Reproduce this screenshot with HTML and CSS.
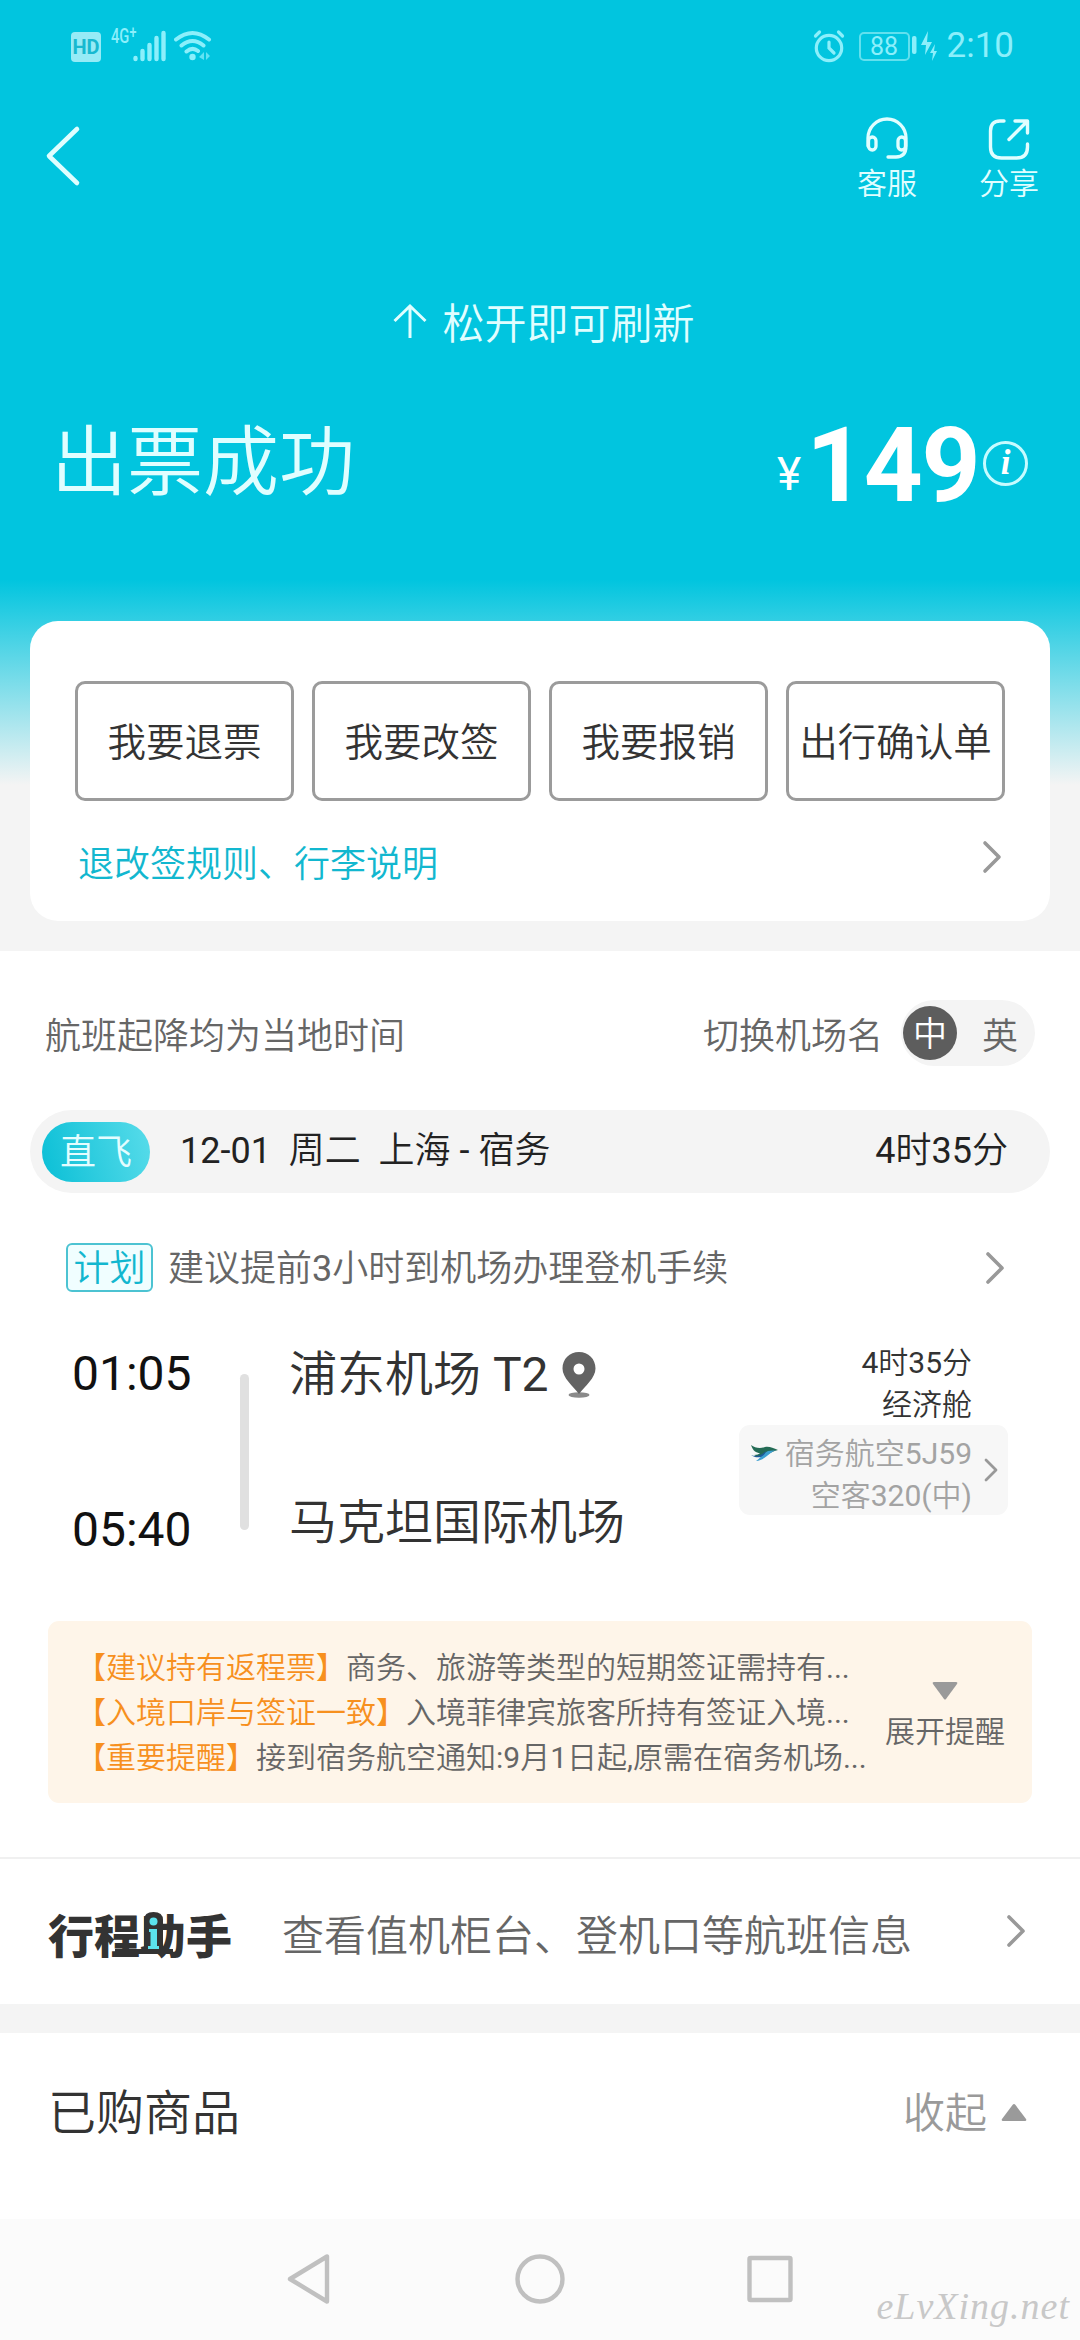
FILE: index.html
```html
<!DOCTYPE html>
<html lang="zh-CN">
<head>
<meta charset="utf-8">
<title>出票成功</title>
<link rel="stylesheet" href="styles.css">
</head>
<body>
<div class="screen">
  <div class="hero">
    <div class="status">
      <div class="status-left">
        <span class="hd">HD</span>
        <span class="net">4G<sup>+</sup></span>
        <svg class="signal" width="34" height="32" viewBox="0 0 34 32"><path d="M2.500 28v1M9.500 21v8M16.500 15v14M23.500 8v21M30.500 3v26" stroke="currentColor" stroke-width="4.400" stroke-linecap="round"/></svg>
        <svg class="wifi" width="38" height="32" viewBox="0 0 38 32" fill="none" stroke="currentColor" stroke-width="4" stroke-linecap="round"><path d="M2 9.500Q18.500-3.500 35 9.500M7.500 15.500Q18.500 6.500 29.500 15.500M12.500 21.500Q18.500 16.500 24 21"/><circle cx="18.500" cy="27" r="3.200" fill="currentColor" stroke="none"/><path d="M30 22v8l-5-3zM32 30v-8l4 4z" fill="currentColor" stroke="none" opacity=".7"/></svg>
      </div>
      <div class="status-right">
        <svg width="32" height="34" viewBox="0 0 32 34" fill="none" stroke="currentColor" stroke-width="3.200" stroke-linecap="round"><circle cx="16" cy="19" r="12.700"/><path d="M16 13v6l5 5M2.500 7l4-4M29.500 7l-4-4"/></svg>
        <span class="battery">88</span>
        <svg class="bolt" width="26" height="32" viewBox="0 0 26 32" fill="currentColor"><rect x="0" y="6" width="4.500" height="18" rx="2"/><path d="M16 1L9 15h5l-1 10 7-13h-5zM23 14l-5 9h3l-1 8 5-10h-3z"/></svg>
        <span class="clock">2:10</span>
      </div>
    </div>
    <div class="topbar">
      <svg class="back" width="36" height="62" viewBox="0 0 36 62" fill="none" stroke="currentColor" stroke-width="4.600" stroke-linecap="round" stroke-linejoin="round"><path d="M32 4L4 31l28 27"/></svg>
      <div class="actions">
        <div class="action">
          <svg width="44" height="44" viewBox="0 0 44 44" fill="none" stroke="currentColor" stroke-width="3.300" stroke-linecap="round"><path d="M3 29V21a19 19 0 0 1 38 0v8c0 8-4 11-10 11h-8"/><rect x="3.500" y="20" width="7.500" height="13" rx="3.700"/><rect x="33" y="20" width="7.500" height="13" rx="3.700"/></svg>
          <span>客服</span>
        </div>
        <div class="action">
          <svg width="44" height="44" viewBox="0 0 44 44" fill="none" stroke="currentColor" stroke-width="3.400" stroke-linecap="round" stroke-linejoin="round"><path d="M17 4h-4Q3.500 4 3.500 14v16q0 11 11 11h15q11 0 11-11v-3"/><path d="M28 4h12.500v12M40 4.500L22 22.500"/></svg>
          <span>分享</span>
        </div>
      </div>
    </div>
    <div class="refresh">
      <svg width="34" height="36" viewBox="0 0 34 36" fill="none" stroke="currentColor" stroke-width="3"><path d="M17 35V3M1.500 18L17 3l15.500 15"/></svg>
      <span>松开即可刷新</span>
    </div>
    <div class="result">
      <h1>出票成功</h1>
      <div class="price">
        <span class="yen">¥</span><span class="amount">149</span>
        <span class="info">i</span>
      </div>
    </div>
    <div class="card">
      <div class="buttons">
        <div class="btn">我要退票</div>
        <div class="btn">我要改签</div>
        <div class="btn">我要报销</div>
        <div class="btn">出行确认单</div>
      </div>
      <div class="rules">
        <span>退改签规则、行李说明</span>
        <svg class="chev" width="20" height="34" viewBox="0 0 20 34"><path d="M3 3l14 14L3 31"/></svg>
      </div>
    </div>
  </div>

  <div class="flight">
    <div class="local">
      <span>航班起降均为当地时间</span>
      <div class="switch">
        <span>切换机场名</span>
        <div class="toggle"><span class="on">中</span><span class="off">英</span></div>
      </div>
    </div>
    <div class="leg">
      <span class="direct">直飞</span>
      <span class="leg-date">12-01&nbsp; 周二&nbsp; 上海 - 宿务</span>
      <span class="leg-time">4时35分</span>
    </div>
    <div class="plan">
      <span class="plan-tag">计划</span>
      <span class="plan-text">建议提前3小时到机场办理登机手续</span>
      <svg class="chev" width="20" height="34" viewBox="0 0 20 34"><path d="M3 3l14 14L3 31"/></svg>
    </div>
    <div class="route">
      <div class="times"><span>01:05</span><span>05:40</span></div>
      <div class="line"></div>
      <div class="airports">
        <div class="airport">浦东机场 T2
          <svg width="36" height="48" viewBox="0 0 36 48"><ellipse cx="18" cy="44" rx="10.500" ry="2.700" fill="#8a8a8a"/><path fill="#636363" fill-rule="evenodd" d="M18 1C8.500 1 1.500 8 1.500 17.500 1.500 27 12 35 18 43c6-8 16.500-16 16.500-25.500C34.500 8 27.500 1 18 1zm0 11.500a5.500 5.500 0 1 1 0 11 5.500 5.500 0 0 1 0-11z"/></svg>
        </div>
        <div class="airport">马克坦国际机场</div>
      </div>
      <div class="details">
        <span class="dt">4时35分</span>
        <span class="dt">经济舱</span>
        <div class="carrier">
          <div class="carrier-text">
            <span><svg class="logo" width="28" height="18" viewBox="0 0 28 18"><path d="M1 1c4 3 9 4 14 2 4-1 8 1 13 3-5 1-8 3-11 5-4 2-9 3-13 0 3 0 5-1 6-2-4 0-7-2-9-8z" fill="#246b55"/><path d="M28 6c-8 0-11 10-22 11 5-3 7-8 12-10z" fill="#3d9fd0"/><path d="M1 11c5 2 10 1 15-4-1 5-8 9-15 4z" fill="#205a98"/></svg>宿务航空5J59</span>
            <span>空客320(中)</span>
          </div>
          <svg class="chev" width="14" height="24" viewBox="0 0 14 24"><path d="M2 2l10 10L2 22"/></svg>
        </div>
      </div>
    </div>
    <div class="notice">
      <div class="notice-lines">
        <p><b>【建议持有返程票】</b>商务、旅游等类型的短期签证需持有...</p>
        <p><b>【入境口岸与签证一致】</b>入境菲律宾旅客所持有签证入境...</p>
        <p><b>【重要提醒】</b>接到宿务航空通知:9月1日起,原需在宿务机场...</p>
      </div>
      <div class="expand">
        <svg width="26" height="18" viewBox="0 0 26 18"><path d="M2 0h22q2 0 1 2L14 17q-1 1-2 0L1 2Q0 0 2 0z" fill="#9a9a9a"/></svg>
        <span>展开提醒</span>
      </div>
    </div>
  </div>

  <div class="assistant">
    <div class="brand">行程助手
      <svg class="brand-mark" width="58" height="44" viewBox="0 0 58 44"><path d="M0 38h58v5H0z" fill="#333"/><path d="M29 43V9q0-8 9.500-8T48 9v34z" fill="#333"/><circle cx="38.500" cy="10.500" r="4" fill="#5be3ee"/><path d="M34 18h8v17h2v3H33v-3h2.500V21H34z" fill="#5be3ee"/></svg>
    </div>
    <span class="assistant-text">查看值机柜台、登机口等航班信息</span>
    <svg class="chev" width="20" height="34" viewBox="0 0 20 34"><path d="M3 3l14 14L3 31"/></svg>
  </div>

  <div class="goods">
    <span>已购商品</span>
    <div class="collapse"><span>收起</span><svg width="26" height="18" viewBox="0 0 26 18"><path d="M2 18h22q2 0 1-2L14.500 2q-1.500-2-3 0L1 16q-1 2 1 2z" fill="#9a9a9a"/></svg></div>
  </div>

  <div class="nav">
    <svg width="48" height="56" viewBox="0 0 48 56"><path d="M42 5.500v45L5 28z"/></svg>
    <svg width="52" height="56" viewBox="0 0 52 56"><circle cx="26" cy="28" r="22.500"/></svg>
    <svg width="48" height="56" viewBox="0 0 48 56"><rect x="3.500" y="7" width="41" height="42" rx="1"/></svg>
    <span class="mark">eLvXing.net</span>
  </div>
</div>
</body>
</html>
```
FILE: styles.css
```css
* { box-sizing: border-box; }
body {
  margin: 0;
  font-family: Roboto, "Noto Sans CJK SC DemiLight", "Noto Sans CJK SC", sans-serif;
  font-weight: 400;
  color: #333;
}
svg { display: block; flex: none; }
h1, p { margin: 0; }

.screen {
  width: 1080px;
  height: 2340px;
  overflow: hidden;
  display: flex;
  flex-direction: column;
  background: #fff;
}
.chev path { fill: none; stroke: #999; stroke-width: 3.6; stroke-linecap: round; stroke-linejoin: round; }

/* header */
.hero {
  height: 951px;
  background: linear-gradient(#01c5df 0, #01c5df 580px, #f4f4f4 785px);
  color: #e0feff;
}
.status {
  height: 92px;
  padding: 0 66px 0 71px;
  display: flex;
  justify-content: space-between;
  align-items: center;
  color: #8ceffb;
}
.status-left, .status-right { display: flex; align-items: center; }
.hd {
  width: 30px;
  height: 30px;
  margin-top: 1px;
  border-radius: 4px;
  background: #96ebf6;
  color: #18b9d0;
  font: 700 20px/31px Roboto, sans-serif;
  text-align: center;
}
.net { align-self: flex-start; margin: -6px 0 0 10px; width: 22px; font: 500 21px/24px Roboto, sans-serif; transform: scaleX(.7); transform-origin: 0 0; white-space: nowrap; }
.net sup { font-size: 18px; line-height: 0; vertical-align: 5px; }
.signal { margin-top: 0; }
.wifi { margin: -1px 0 0 7px; }
.battery {
  width: 51px;
  height: 29px;
  margin-left: 14px;
  border: 2px solid #62e0ee;
  border-radius: 5px;
  font-size: 25px;
  line-height: 26px;
  text-align: center;
}
.bolt { margin-left: 2px; }
.clock { margin-left: 9px; font-size: 35px; line-height: 40px; }

.topbar {
  height: 128px;
  padding: 24px 41px 0 45px;
  display: flex;
  justify-content: space-between;
}
.back { margin-top: 9px; }
.actions { display: flex; gap: 62px; }
.action { display: flex; flex-direction: column; align-items: center; font-size: 30px; line-height: 42px; gap: 2px; width: 60px; padding-top: 1px; }
.refresh {
  height: 201px;
  padding-left: 8px;
  display: flex;
  align-items: center;
  justify-content: center;
  gap: 15px;
  font-size: 42px;
}
.result {
  height: 200px;
  padding: 0 52px 0 51px;
  display: flex;
  justify-content: space-between;
}
.result h1 { font-size: 76px; font-weight: 400; line-height: 90px; margin-top: -3px; }
.price { display: flex; color: #fff; }
.yen { font-size: 46px; line-height: 60px; margin: 23px 5px 0 0; }
.amount { font-size: 103px; font-weight: 700; line-height: 90px; letter-spacing: -1.5px; }
.info {
  width: 45px;
  height: 45px;
  margin: 20px 0 0 4px;
  border: 3px solid #c6fbff;
  border-radius: 50%;
  font: italic 700 35px/38px "Liberation Serif", serif;
  text-align: center;
}

.card {
  height: 300px;
  margin: 0 30px;
  padding: 60px 45px 0;
  border-radius: 28px;
  background: #fff;
}
.buttons { display: grid; grid-template-columns: repeat(4, 219px); gap: 18px; }
.btn {
  height: 120px;
  border: 3px solid #9b9b9b;
  border-radius: 10px;
  color: #333;
  font-size: 38.5px;
  line-height: 118px;
  text-align: center;
  white-space: nowrap;
}
.rules {
  display: flex;
  justify-content: space-between;
  margin: 41px 3px 0;
  font-size: 36px;
  line-height: 46px;
  color: #12b7cf;
}
.rules .chev { margin-top: -2px; }

/* flight */
.flight { height: 906px; }
.local {
  height: 159px;
  padding: 4px 45px 0 45px;
  display: flex;
  align-items: center;
  justify-content: space-between;
  font-size: 36px;
  color: #666;
}
.switch { display: flex; align-items: center; gap: 18px; }
.toggle {
  width: 134px;
  height: 66px;
  padding: 0 17px 0 2px;
  border-radius: 33px;
  background: #f4f4f4;
  display: flex;
  align-items: center;
  justify-content: space-between;
}
.on {
  width: 54px;
  height: 54px;
  border-radius: 50%;
  background: #5d5d5d;
  color: #fff;
  font-size: 34px;
  line-height: 56px;
  text-align: center;
}
.leg {
  height: 83px;
  margin: 0 30px;
  padding: 0 42px 0 12px;
  border-radius: 42px;
  background: #f4f4f4;
  display: flex;
  align-items: center;
  font-size: 36px;
  line-height: 78px;
  color: #222;
}
.direct {
  width: 108px;
  height: 60px;
  margin-right: 30px;
  border-radius: 30px;
  background: linear-gradient(75deg, #0abfd6, #58dcea);
  color: #e4fdff;
  line-height: 63px;
  text-align: center;
}
.leg-date, .leg-time { padding-bottom: 2px; }
.leg-time { margin-left: auto; }
.plan {
  height: 148px;
  padding: 0 75px 0 66px;
  display: flex;
  align-items: center;
  font-size: 36px;
  color: #666;
}
.plan-tag {
  width: 87px;
  height: 49px;
  margin-right: 15px;
  border: 2px solid #4cc3d2;
  border-radius: 6px;
  background: #f0feff;
  color: #12b7cf;
  line-height: 48px;
  text-align: center;
}
.plan-text { padding-bottom: 4px; }
.plan .chev { margin: 2px 0 0 auto; }
.route {
  height: 280px;
  padding: 0 72px 0 72px;
  display: flex;
}
.times { width: 168px; padding-top: 3px; display: flex; flex-direction: column; gap: 96px; font-size: 48px; line-height: 60px; color: #111; }
.line { width: 9px; height: 156px; margin-top: 33px; border-radius: 5px; background: #e0e0e0; }
.airports { margin-left: 40px; padding-top: 4px; display: flex; flex-direction: column; gap: 88px; font-size: 48px; line-height: 60px; }
.airport { display: flex; align-items: center; gap: 12px; }
.details { margin-left: auto; width: 269px; padding-top: 1px; display: flex; flex-direction: column; font-size: 30px; line-height: 42px; text-align: right; }
.dt { padding-right: 36px; }
.carrier {
  height: 90px;
  margin-top: -1px;
  padding: 8px 10px 0 0;
  border-radius: 11px;
  background: #f7f7f7;
  color: #a3a3a3;
  display: flex;
  justify-content: flex-end;
  gap: 12px;
}
.carrier-text { display: flex; flex-direction: column; align-items: flex-end; }
.carrier-text span { display: flex; white-space: nowrap; }
.logo { margin: 11px 7px 0 0; }
.carrier .chev { margin-top: 25px; }
.carrier .chev path { stroke-width: 2.8; }
.notice {
  height: 182px;
  margin: 0 48px;
  padding: 24px 27px 0 28px;
  border-radius: 11px;
  background: #fef5e9;
  display: flex;
  justify-content: space-between;
  font-size: 30px;
  line-height: 45px;
  color: #666;
  white-space: nowrap;
}
.notice b { font-weight: 400; color: #f7901e; }
.expand { display: flex; flex-direction: column; align-items: center; gap: 9px; padding-top: 37px; }

/* trip assistant */
.assistant {
  height: 147px;
  padding: 3px 54px 0 48px;
  border-top: 2px solid #f0f0f0;
  display: flex;
  align-items: center;
  font-size: 42px;
  color: #666;
}
.brand { position: relative; width: 234px; font: 900 46px/60px "Noto Sans CJK SC", sans-serif; color: #333; }
.brand-mark { position: absolute; left: 67px; top: 8px; }
.assistant-text { padding-bottom: 2px; }
.assistant .chev { margin: -4px 0 0 auto; }
.goods {
  height: 215px;
  padding: 0 53px 34px 48px;
  border-top: 29px solid #f4f4f4;
  display: flex;
  align-items: center;
  justify-content: space-between;
  font-size: 48px;
}
.collapse { display: flex; align-items: center; gap: 14px; font-size: 42px; color: #9a9a9a; }
.collapse svg { margin-top: 6px; }

/* system navigation */
.nav {
  position: relative;
  height: 121px;
  padding: 32px 286px 0 285px;
  background: #fbfbfb;
  display: flex;
  justify-content: space-between;
}
.nav path, .nav circle, .nav rect { fill: none; stroke: #c0c0c0; stroke-width: 4.4; stroke-linejoin: round; }
.mark {
  position: absolute;
  right: 10px;
  bottom: 13px;
  font: italic 400 38px/42px "Liberation Serif", serif;
  letter-spacing: 1px;
  color: #c8c8c8;
}
```
